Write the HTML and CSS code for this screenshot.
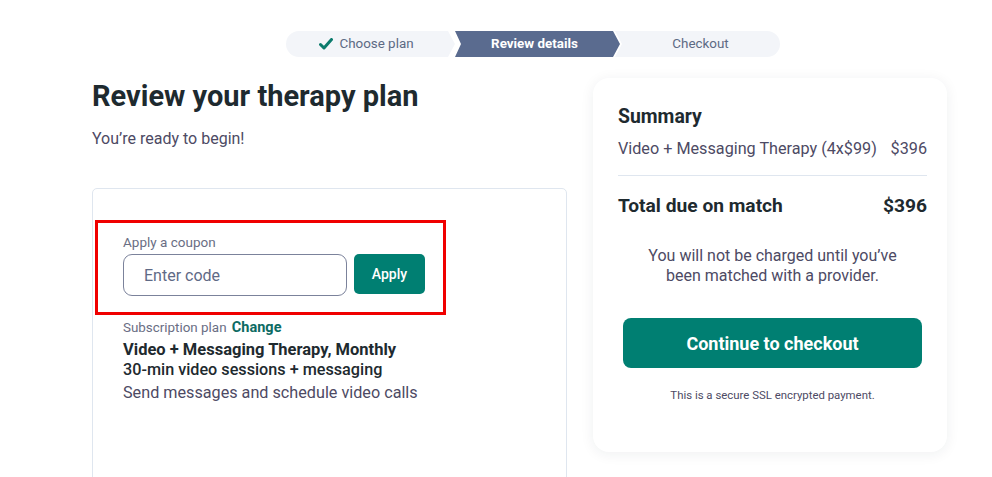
FILE: index.html
```html
<!DOCTYPE html>
<html>
<head>
  <title>Review your therapy plan</title>
  <link rel="stylesheet" href="styles.css">
</head>
<body>
  <div class="stepper">
    <div class="step step-first">
      <svg class="step-check" width="14" height="12" viewBox="0 0 14 12">
        <path d="M1.5 6.5 L5 10 L12.5 1.5" fill="none" stroke="#0b7b6d" stroke-width="3" stroke-linecap="round" stroke-linejoin="round"/>
      </svg>
      Choose plan
    </div>
    <div class="step step-middle step-active">Review details</div>
    <div class="step step-last">Checkout</div>
  </div>

  <div class="page">
    <div class="main-col">
      <h1 class="page-title">Review your therapy plan</h1>
      <p class="page-lead">You’re ready to begin!</p>

      <div class="plan-card">
        <div class="coupon">
          <label class="coupon-label" for="coupon">Apply a coupon</label>
          <div class="coupon-row">
            <input class="coupon-input" id="coupon" type="text" placeholder="Enter code">
            <button class="coupon-button">Apply</button>
          </div>
        </div>

        <div class="plan-info">
          <div class="plan-label">Subscription plan <a class="plan-change" href="#">Change</a></div>
          <div class="plan-name">Video + Messaging Therapy, Monthly</div>
          <div class="plan-sessions">30-min video sessions + messaging</div>
          <div class="plan-desc">Send messages and schedule video calls</div>
        </div>
      </div>
    </div>

    <div class="summary-card">
      <h2 class="summary-title">Summary</h2>
      <div class="summary-row">
        <span>Video + Messaging Therapy (4x$99)</span>
        <span>$396</span>
      </div>
      <div class="summary-total">
        <span>Total due on match</span>
        <span>$396</span>
      </div>
      <p class="summary-note">You will not be charged until you’ve been matched with a provider.</p>
      <button class="checkout-button">Continue to checkout</button>
      <p class="secure-note">This is a secure SSL encrypted payment.</p>
    </div>
  </div>
</body>
</html>
```

FILE: styles.css
```css
body {
  margin: 0;
  font-family: Roboto, "Liberation Sans", Arial, sans-serif;
  color: #1e2a2f;
  background: #fff;
}

/* progress steps */
.stepper {
  display: flex;
  margin: 31px 0 0 286px;
  height: 26px;
}

.step {
  display: flex;
  align-items: center;
  justify-content: center;
  gap: 6px;
  height: 26px;
  box-sizing: border-box;
  font-size: 13.4px;
  line-height: 24px;
  color: #5d6a84;
  background-color: #f3f5f9;
}

.step-first {
  width: 169px;
  padding-right: 8px;
  border-radius: 13px 0 0 13px;
  clip-path: polygon(0 0, calc(100% - 7px) 0, 100% 50%, calc(100% - 7px) 100%, 0 100%);
}

.step-middle {
  width: 165px;
  padding-right: 6px;
  clip-path: polygon(0 0, calc(100% - 7px) 0, 100% 50%, calc(100% - 7px) 100%, 0 100%, 6px 50%);
}

.step-last {
  width: 165px;
  margin-left: -5px;
  padding-left: 6px;
  border-radius: 0 13px 13px 0;
  clip-path: polygon(0 0, 100% 0, 100% 100%, 0 100%, 7px 50%);
}

.step-active {
  background-color: #5a6b8f;
  color: #fff;
  font-weight: bold;
}

.step-check {
  display: block;
}

/* two column layout */
.page {
  display: flex;
  gap: 26px;
  margin: 21px 0 0 92px;
}

.main-col {
  width: 475px;
}

.page-title {
  margin: 0;
  font-size: 29px;
  line-height: 36px;
  font-weight: bold;
  color: #1e2a2f;
}

.page-lead {
  margin: 13px 0 0;
  font-size: 16px;
  line-height: 24px;
  color: #4d4a64;
}

.plan-card {
  margin-top: 37px;
  min-height: 320px;
  border: 1px solid #dfe6ef;
  border-radius: 5px;
  padding-top: 31px;
}

.coupon {
  width: 351px;
  box-sizing: border-box;
  margin-left: 2px;
  padding: 10px 0 16px 25px;
  border: 3px solid #f00000;
}

.coupon-label {
  display: block;
  font-size: 13.5px;
  line-height: 18px;
  color: #6a6e84;
  margin-bottom: 3px;
}

.coupon-row {
  display: flex;
  gap: 7px;
}

.coupon-input {
  width: 224px;
  height: 42px;
  box-sizing: border-box;
  padding: 0 20px;
  border: 1px solid #7b829b;
  border-radius: 9px;
  font-family: inherit;
  font-size: 16px;
  color: #1e2a2f;
}

.coupon-input::placeholder {
  color: #5f6a86;
}

.coupon-button {
  width: 71px;
  height: 40px;
  border: none;
  border-radius: 5px;
  background-color: #007f72;
  color: #fff;
  font-family: inherit;
  font-size: 14px;
  font-weight: 500;
  cursor: pointer;
}

.plan-info {
  padding: 4px 0 0 30px;
}

.plan-label {
  font-size: 13.4px;
  line-height: 18px;
  color: #6a6e84;
}

.plan-change {
  color: #0d6b63;
  font-size: 14.5px;
  font-weight: bold;
  text-decoration: none;
  margin-left: 2px;
}

.plan-name {
  margin-top: 3px;
  font-size: 16.5px;
  line-height: 20px;
  font-weight: bold;
  color: #1e2a2f;
}

.plan-sessions {
  font-size: 16.2px;
  line-height: 20px;
  font-weight: 500;
  color: #1e2a2f;
}

.plan-desc {
  margin-top: 2px;
  font-size: 16.2px;
  line-height: 22px;
  color: #4d4a64;
}

/* summary column */
.summary-card {
  width: 354px;
  height: 374px;
  box-sizing: border-box;
  padding: 27px 20px 0 25px;
  border-radius: 16px;
  background: #fff;
  box-shadow: 0 2px 14px rgba(30, 40, 60, 0.07);
}

.summary-title {
  margin: 0;
  font-size: 19.4px;
  line-height: 24px;
  font-weight: bold;
  color: #1e2a2f;
}

.summary-row {
  display: flex;
  justify-content: space-between;
  margin-top: 8px;
  padding-bottom: 14px;
  border-bottom: 1px solid #dfe6ef;
  font-size: 16.2px;
  line-height: 24px;
  color: #4d4a64;
}

.summary-total {
  display: flex;
  justify-content: space-between;
  margin-top: 18px;
  font-size: 19.2px;
  line-height: 24px;
  font-weight: bold;
  color: #1e2a2f;
}

.summary-note {
  margin: 28px 0 0;
  padding: 0 26px;
  text-align: center;
  font-size: 16px;
  line-height: 20px;
  color: #4d4a64;
}

.checkout-button {
  display: block;
  width: 299px;
  height: 50px;
  margin: 32px auto 0;
  border: none;
  border-radius: 8px;
  background-color: #007f72;
  color: #fff;
  font-family: inherit;
  font-size: 18px;
  font-weight: bold;
  cursor: pointer;
}

.secure-note {
  margin: 20px 0 0;
  text-align: center;
  font-size: 11.4px;
  line-height: 14px;
  color: #4d4a64;
}
```
